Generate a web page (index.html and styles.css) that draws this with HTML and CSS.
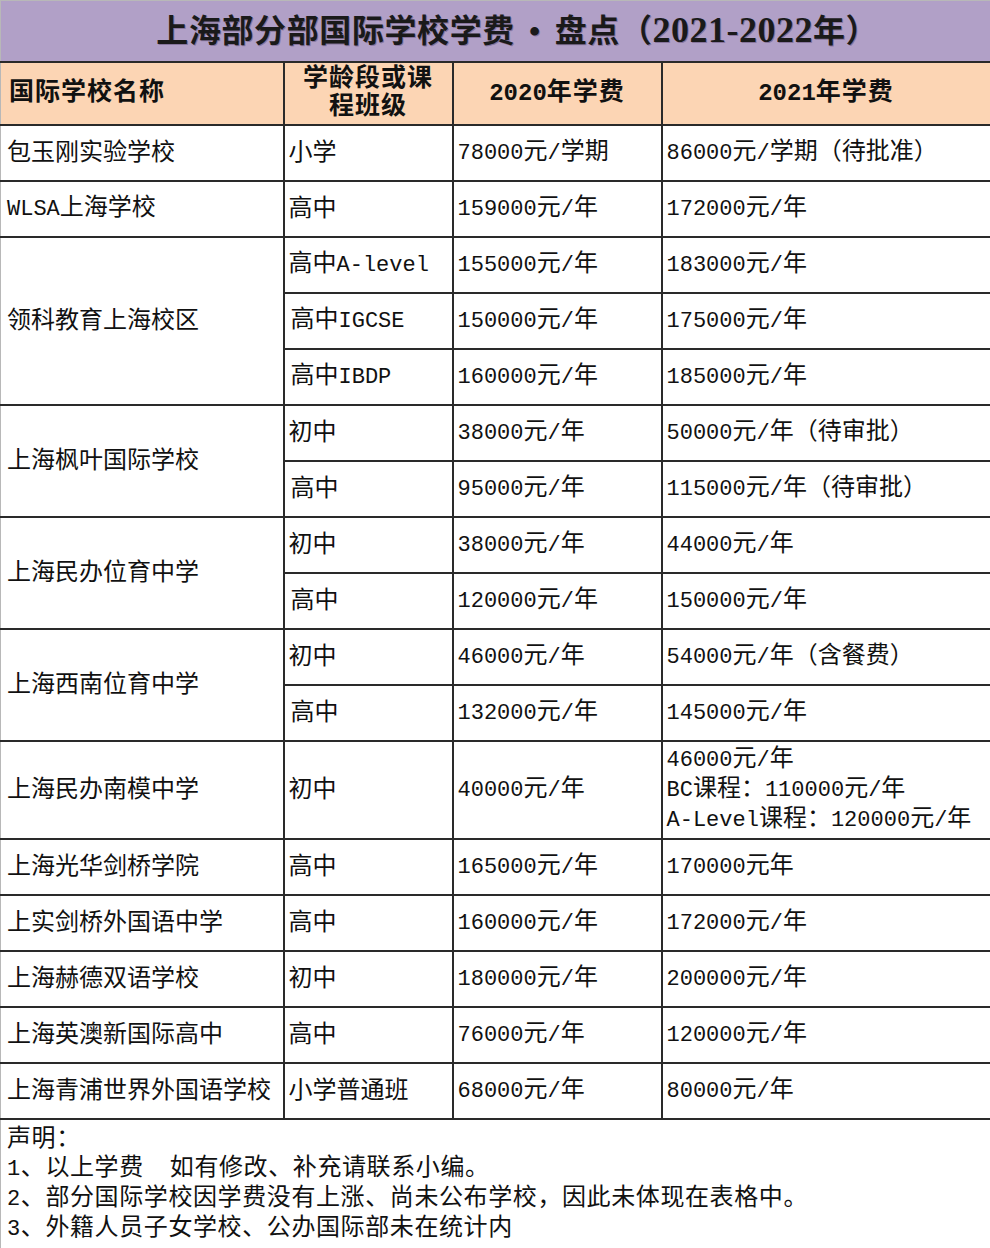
FILE: index.html
```html
<!DOCTYPE html>
<html lang="zh-CN">
<head>
<meta charset="utf-8">
<title>上海部分部国际学校学费盘点</title>
<link rel="stylesheet" href="styles.css">
</head>
<body>
<table class="sheet">
  <colgroup>
    <col class="c1"><col class="c2"><col class="c3"><col class="c4">
  </colgroup>
  <tr class="r-title"><td colspan="4" class="title">上海部分部国际学校学费<span class="dot">•</span>盘点（<span class="tn">2021-2022</span>年）</td></tr>
  <tr class="r-head">
    <th class="h-left">国际学校名称</th>
    <th>学龄段或课<br>程班级</th>
    <th><span class="hn">2020</span>年学费</th>
    <th><span class="hn">2021</span>年学费</th>
  </tr>
  <tr class="r"><td>包玉刚实验学校</td><td>小学</td><td><span class="la">78000</span>元<span class="la">/</span>学期</td><td><span class="la">86000</span>元<span class="la">/</span>学期（待批准）</td></tr>
  <tr class="r"><td><span class="la">WLSA</span>上海学校</td><td>高中</td><td><span class="la">159000</span>元<span class="la">/</span>年</td><td><span class="la">172000</span>元<span class="la">/</span>年</td></tr>
  <tr class="r"><td rowspan="3">领科教育上海校区</td><td>高中<span class="la">A-level</span></td><td><span class="la">155000</span>元<span class="la">/</span>年</td><td><span class="la">183000</span>元<span class="la">/</span>年</td></tr>
  <tr class="r"><td>高中<span class="la">IGCSE</span></td><td><span class="la">150000</span>元<span class="la">/</span>年</td><td><span class="la">175000</span>元<span class="la">/</span>年</td></tr>
  <tr class="r"><td>高中<span class="la">IBDP</span></td><td><span class="la">160000</span>元<span class="la">/</span>年</td><td><span class="la">185000</span>元<span class="la">/</span>年</td></tr>
  <tr class="r"><td rowspan="2">上海枫叶国际学校</td><td>初中</td><td><span class="la">38000</span>元<span class="la">/</span>年</td><td><span class="la">50000</span>元<span class="la">/</span>年（待审批）</td></tr>
  <tr class="r"><td>高中</td><td><span class="la">95000</span>元<span class="la">/</span>年</td><td><span class="la">115000</span>元<span class="la">/</span>年（待审批）</td></tr>
  <tr class="r"><td rowspan="2">上海民办位育中学</td><td>初中</td><td><span class="la">38000</span>元<span class="la">/</span>年</td><td><span class="la">44000</span>元<span class="la">/</span>年</td></tr>
  <tr class="r"><td>高中</td><td><span class="la">120000</span>元<span class="la">/</span>年</td><td><span class="la">150000</span>元<span class="la">/</span>年</td></tr>
  <tr class="r"><td rowspan="2">上海西南位育中学</td><td>初中</td><td><span class="la">46000</span>元<span class="la">/</span>年</td><td><span class="la">54000</span>元<span class="la">/</span>年（含餐费）</td></tr>
  <tr class="r"><td>高中</td><td><span class="la">132000</span>元<span class="la">/</span>年</td><td><span class="la">145000</span>元<span class="la">/</span>年</td></tr>
  <tr class="r-tall"><td>上海民办南模中学</td><td>初中</td><td><span class="la">40000</span>元<span class="la">/</span>年</td><td><span class="la">46000</span>元<span class="la">/</span>年<br><span class="la">BC</span>课程：<span class="la">110000</span>元<span class="la">/</span>年<br><span class="la">A-Level</span>课程：<span class="la">120000</span>元<span class="la">/</span>年</td></tr>
  <tr class="r"><td>上海光华剑桥学院</td><td>高中</td><td><span class="la">165000</span>元<span class="la">/</span>年</td><td><span class="la">170000</span>元年</td></tr>
  <tr class="r"><td>上实剑桥外国语中学</td><td>高中</td><td><span class="la">160000</span>元<span class="la">/</span>年</td><td><span class="la">172000</span>元<span class="la">/</span>年</td></tr>
  <tr class="r"><td>上海赫德双语学校</td><td>初中</td><td><span class="la">180000</span>元<span class="la">/</span>年</td><td><span class="la">200000</span>元<span class="la">/</span>年</td></tr>
  <tr class="r"><td>上海英澳新国际高中</td><td>高中</td><td><span class="la">76000</span>元<span class="la">/</span>年</td><td><span class="la">120000</span>元<span class="la">/</span>年</td></tr>
  <tr class="r"><td>上海青浦世界外国语学校</td><td>小学普通班</td><td><span class="la">68000</span>元<span class="la">/</span>年</td><td><span class="la">80000</span>元<span class="la">/</span>年</td></tr>
  <tr class="r-note"><td colspan="4" class="note">声明：<br><span class="la">1</span>、以上学费<span class="gap"></span>如有修改、补充请联系小编。<br><span class="la">2</span>、部分国际学校因学费没有上涨、尚未公布学校，因此未体现在表格中。<br><span class="la">3</span>、外籍人员子女学校、公办国际部未在统计内</td></tr>
</table>
</body>
</html>
```

FILE: styles.css
```css
html, body {
  margin: 0;
  padding: 0;
  background: #ffffff;
}

.sheet {
  width: 990px;
  border-collapse: collapse;
  table-layout: fixed;
  font-family: "Liberation Mono", "Noto Sans CJK SC", monospace;
  font-size: 24px;
  line-height: 29px;
  color: #111111;
}

.c1 { width: 283px; }
.c2 { width: 169px; }
.c3 { width: 209px; }
.c4 { width: 329px; }

.sheet td,
.sheet th {
  border: 2px solid #2a2a2a;
  padding: 0 0 0 4px;
  vertical-align: middle;
  text-align: left;
  white-space: nowrap;
  overflow: hidden;
}

.sheet td:first-child,
.sheet th:first-child {
  border-left: 1px solid #b8b8b8;
  padding-left: 6px;
}

.la {
  font-size: 22px;
}

.gap {
  display: inline-block;
  width: 26px;
}

.r-title td {
  border-top: 1px solid #b8b8b8;
}

.title {
  height: 60px;
  background: #b1a0c7;
  text-align: center !important;
  padding: 0 0 0 44px !important;
  font-family: "Liberation Serif", "Noto Sans CJK SC", serif;
  font-weight: 700;
  font-size: 32px;
  letter-spacing: 0.6px;
  color: #1a1a1a;
  text-shadow: 1px 1px 0 rgba(60, 40, 80, 0.35);
}

.title .dot {
  padding: 0 14px;
}

.title .tn {
  font-size: 36px;
  letter-spacing: 0.5px;
}

.r-head th {
  height: 61px;
  background: #fcd5b4;
  text-align: center;
  font-family: "Liberation Mono", "Noto Sans CJK SC", monospace;
  font-weight: 700;
  font-size: 25px;
  line-height: 28px;
  letter-spacing: 1px;
  padding: 0;
}

.r-head .hn {
  font-size: 24px;
  letter-spacing: 0;
}

.r-head th.h-left {
  text-align: left;
  padding-left: 8px;
}

.r td {
  height: 54px;
}

.r-tall td {
  height: 96px;
}

.note {
  height: 123px;
  vertical-align: top !important;
  padding-top: 5px !important;
  letter-spacing: 0.6px;
  border-right: 2px solid #2a2a2a;
  border-bottom: 3px solid #2a2a2a !important;
}
```
